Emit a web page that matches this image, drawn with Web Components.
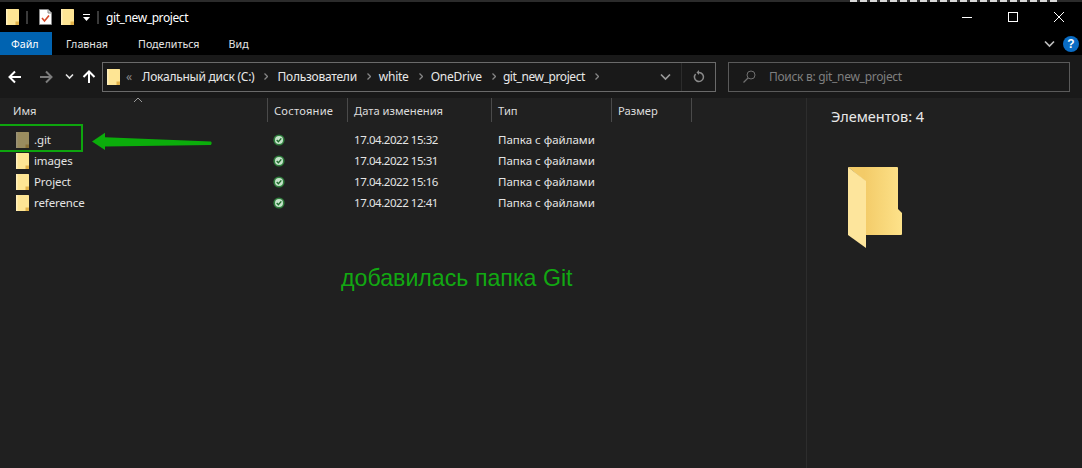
<!DOCTYPE html>
<html>
<head>
<meta charset="utf-8">
<style>
  html, body { margin: 0; height: 100%; background: #202020; overflow: hidden; }
  body { font-family: "Noto Sans", "Open Sans", sans-serif; }
</style>
</head>
<body>
<explorer-window></explorer-window>

<template id="folder-tpl">
  <style>
    :host { display: inline-flex; width: 13px; height: 16px; flex: none; }
    svg { display: block; width: 100%; height: 100%; }
  </style>
  <svg viewBox="0 0 13 16">
    <path d="M0 0.5 Q0 0 .5 0 H12.5 Q13 0 13 .5 V15.5 Q13 16 12.5 16 H.5 Q0 16 0 15.5Z" fill="#fee594"/>
    <path d="M9.5 16 V12.5 H13 V16Z" fill="#e2b24a"/>
    <path d="M0 0 H1.5 V16 H0Z" fill="#fff0bd"/>
  </svg>
</template>

<script>
class BaseEl extends HTMLElement {
  constructor(html) {
    super();
    this.attachShadow({mode: "open"}).innerHTML = html;
  }
}

class FolderIcon extends HTMLElement {
  constructor() {
    super();
    const shadow = this.attachShadow({mode: "open"});
    shadow.appendChild(document.getElementById("folder-tpl").content.cloneNode(true));
  }
}

class TitleBar extends BaseEl {
  constructor() {
    super(`
    <style>
      :host { display: flex; align-items: center; height: 30px; background: #000; color: #fff; font-size: 12px; padding-left: 6px; box-sizing: border-box; }
      .sep { width: 2px; height: 13px; background: #3a3a3a; flex: none; }
      .doc { margin: 0 9px 0 11px; display: block; flex: none; }
      .down { margin: 0 6px 0 8px; display: block; flex: none; }
      .name { margin-left: 7px; letter-spacing: -.4px; }
      .win { margin-left: auto; display: flex; height: 30px; }
      .win div { width: 46px; display: flex; align-items: center; justify-content: center; }
    </style>
    <folder-icon></folder-icon>
    <div class="sep" style="margin-left:7px"></div>
    <svg class="doc" width="13" height="16" viewBox="0 0 13 16">
      <path d="M.5 .5H9L12.5 4V15.5H.5Z" fill="#fff" stroke="#8a8a8a"/>
      <path d="M9 .5V4H12.5" fill="#ddd" stroke="#8a8a8a"/>
      <path d="M3 9L5.5 12L10 6.5" fill="none" stroke="#d4492a" stroke-width="1.6"/>
    </svg>
    <folder-icon></folder-icon>
    <svg class="down" width="9" height="9" viewBox="0 0 9 9">
      <path d="M1 1.5H8" stroke="#fff"/><path d="M1 4H8L4.5 8Z" fill="#fff"/>
    </svg>
    <div class="sep"></div>
    <span class="name">git_new_project</span>
    <div class="win">
      <div><svg width="10" height="10"><path d="M0 5.5H10" stroke="#fff"/></svg></div>
      <div><svg width="10" height="10"><rect x=".5" y=".5" width="9" height="9" fill="none" stroke="#fff"/></svg></div>
      <div><svg width="10" height="10"><path d="M0 0L10 10M10 0L0 10" stroke="#fff"/></svg></div>
    </div>`);
  }
}

class RibbonTabs extends BaseEl {
  constructor() {
    super(`
    <style>
      :host { display: flex; align-items: center; height: 23px; background: #000; color: #e4e4e4; font-size: 10.7px; }
      .t { height: 23px; display: flex; align-items: center; }
      .t.on { background: #0063b1; color: #fff; box-sizing: border-box; width: 52px; padding-left: 11px; }
      .end { margin-left: auto; display: flex; align-items: center; padding-right: 3px; gap: 8px; }
      .help { width: 16px; height: 16px; border-radius: 50%; background: #0a6cc4; color: #fff; font: bold 12px/16px "Liberation Sans", sans-serif; text-align: center; }
    </style>
    <div class="t on">Файл</div>
    <div class="t" style="margin-left:14px">Главная</div>
    <div class="t" style="margin-left:30px">Поделиться</div>
    <div class="t" style="margin-left:29px">Вид</div>
    <div class="end">
      <svg width="11" height="8" viewBox="0 0 11 8"><path d="M1 1.5L5.5 6L10 1.5" fill="none" stroke="#bdbdbd" stroke-width="1.7"/></svg>
      <div class="help">?</div>
    </div>`);
  }
}

class NavBar extends BaseEl {
  constructor() {
    super(`
    <style>
      :host { display: flex; align-items: center; height: 43px; background: #191919; color: #e8e8e8; font-size: 12px; }
      .arrows { width: 102px; flex: none; display: flex; align-items: center; box-sizing: border-box; padding-left: 8px; }
      .addr { display: flex; align-items: center; width: 614px; height: 30px; box-sizing: border-box; border: 1px solid #6a6a6a; padding-left: 4px; flex: none; }
      .crumb { white-space: nowrap; letter-spacing: -.25px; }
      .crumb.git { letter-spacing: -.4px; }
      .gt { display: block; margin: 0 9px 0 10px; flex: none; }
      .gt.n { margin-right: 8px; }
      .gt.s { margin-right: 7px; }
      .ll { color: #8a8a8a; margin: 0 10px 0 6px; font-size: 12px; }
      .drop { margin-left: auto; width: 32px; display: flex; justify-content: center; flex: none; }
      .refresh { width: 33px; height: 28px; display: flex; align-items: center; justify-content: center; border-left: 1px solid #2c2c2c; flex: none; }
      .search { margin-left: 12px; width: 342px; height: 30px; box-sizing: border-box; border: 1px solid #5a5a5a; display: flex; align-items: center; padding-left: 14px; color: #7f7f7f; flex: none; }
      .search svg { margin-right: 13px; }
      .search span { letter-spacing: -.3px; }
    </style>
    <div class="arrows">
      <svg width="14" height="14" viewBox="0 0 14 14"><path d="M13 7H2M7 1.5L1.5 7L7 12.5" fill="none" stroke="#fff" stroke-width="2"/></svg>
      <svg style="margin-left:17px" width="14" height="14" viewBox="0 0 14 14"><path d="M1 7H12M7 1.5L12.5 7L7 12.5" fill="none" stroke="#7c7c7c" stroke-width="2"/></svg>
      <svg style="margin-left:12px" width="9" height="7" viewBox="0 0 9 7"><path d="M1 1.5L4.5 5L8 1.5" fill="none" stroke="#e4e4e4" stroke-width="1.6"/></svg>
      <svg style="margin-left:8px" width="14" height="14" viewBox="0 0 14 14"><path d="M7 13V2M1.5 7L7 1.5L12.5 7" fill="none" stroke="#fff" stroke-width="2"/></svg>
    </div>
    <div class="addr">
      <folder-icon></folder-icon>
      <span class="ll">«</span>
      <span class="crumb">Локальный диск (C:)</span>${NavBar.gt("")}
      <span class="crumb">Пользователи</span>${NavBar.gt("n")}
      <span class="crumb">white</span>${NavBar.gt("n")}
      <span class="crumb">OneDrive</span>${NavBar.gt("s")}
      <span class="crumb git">git_new_project</span>${NavBar.gt("")}
      <div class="drop"><svg width="11" height="8" viewBox="0 0 11 8"><path d="M1 1.5L5.5 6L10 1.5" fill="none" stroke="#9a9a9a" stroke-width="1.7"/></svg></div>
      <div class="refresh"><svg width="12" height="13" viewBox="0 0 12 13"><path d="M6 2.5A4.5 4.5 0 1 1 2.6 4" fill="none" stroke="#8a8a8a" stroke-width="1.5"/><path d="M6 0V5L3.5 2.5Z" fill="#8a8a8a"/></svg></div>
    </div>
    <div class="search">
      <svg width="13" height="13" viewBox="0 0 13 13"><circle cx="8" cy="5" r="4" fill="none" stroke="#6f6f6f"/><path d="M5 8L.5 12.5" stroke="#6f6f6f" stroke-width="1.2"/></svg>
      <span>Поиск в: git_new_project</span>
    </div>`);
  }
  static gt(cls) {
    return `<svg class="gt ${cls}" width="4" height="7" viewBox="0 0 4 7"><path d="M.5 .5L3.5 3.5L.5 6.5" fill="none" stroke="#858585" stroke-width="1.3"/></svg>`;
  }
}

class ColumnHeader extends BaseEl {
  constructor() {
    super(`
    <style>
      :host { display: grid; grid-template-columns: 268px 80px 144px 120px 80px; height: 26px; color: #dcdcdc; font-size: 11.2px; position: relative; }
      div { display: flex; align-items: center; padding-left: 6px; box-sizing: border-box; border-right: 1px solid #4a4a4a; height: 24px; white-space: nowrap; }
      div:first-of-type { padding-left: 13px; }
      .st { letter-spacing: .2px; }
      .sort { position: absolute; left: 133px; top: -1px; }
    </style>
    <div>Имя</div><div class="st">Состояние</div><div>Дата изменения</div><div>Тип</div><div>Размер</div>
    <svg class="sort" width="10" height="6" viewBox="0 0 10 6"><path d="M1 5L5 1L9 5" fill="none" stroke="#9a9a9a"/></svg>`);
  }
}

class FileRow extends BaseEl {
  constructor() {
    super(`
    <style>
      :host { display: grid; grid-template-columns: 268px 80px 144px 120px; height: 21px; align-items: center; color: #e4e4e4; font-size: 11.5px; }
      .name { display: flex; align-items: center; padding-left: 16px; gap: 5px; letter-spacing: -.1px; }
      .state { padding-left: 5px; display: flex; align-items: center; }
      .date { padding-left: 6px; letter-spacing: -.45px; }
      .type { padding-left: 6px; white-space: nowrap; }
      :host([dim]) folder-icon { opacity: .55; }
    </style>
    <div class="name"><folder-icon></folder-icon><span id="n"></span></div>
    <div class="state"><svg width="12" height="12" viewBox="0 0 12 12"><circle cx="6" cy="6" r="5.6" fill="#2f7d3c"/><circle cx="6" cy="6" r="4" fill="#c4e3c9"/><path d="M3.7 6.1L5.4 7.8L8.3 4.4" fill="none" stroke="#1f6a2d" stroke-width="1.4"/></svg></div>
    <div class="date" id="d"></div>
    <div class="type">Папка с файлами</div>`);
  }
  connectedCallback() {
    this.shadowRoot.getElementById("n").textContent = this.getAttribute("name");
    this.shadowRoot.getElementById("d").textContent = this.getAttribute("date");
  }
}

class PreviewPane extends BaseEl {
  constructor() {
    super(`
    <style>
      :host { display: block; border-left: 1px solid #2d2d2d; height: 100%; box-sizing: border-box; color: #e8e8e8; font-size: 14.5px; padding: 8px 0 0 24px; }
      svg { display: block; margin: 41px 0 0 17px; }
    </style>
    <div>Элементов: 4</div>
    <svg width="55" height="82" viewBox="0 0 55 82">
      <defs><linearGradient id="b" x1="0" x2="1"><stop offset=".3" stop-color="#f3cb68"/><stop offset="1" stop-color="#fde28a"/></linearGradient></defs>
      <path d="M0 0H49Q50 0 50 1V42L54 46V67Q54 68 53 68H17V14Z" fill="url(#b)"/>
      <path d="M0 0L18 14V81L0 68Z" fill="#fde59c"/>
    </svg>`);
  }
}

class ExplorerWindow extends BaseEl {
  constructor() {
    super(`
    <style>
      :host { display: flex; flex-direction: column; height: 468px; background: #202020; position: relative; overflow: hidden; }
      .top { height: 2px; background: #2b2b2b; flex: none; position: relative; }
      .top i { position: absolute; left: 850px; top: 0; width: 210px; height: 2px; background: repeating-linear-gradient(90deg, #d8d8d8 0 7px, #2b2b2b 7px 10px); }
      .main { flex: 1; display: grid; grid-template-columns: 806px 1fr; min-height: 0; }
      .rows { padding-top: 5px; }
      .box { position: absolute; left: -3px; top: 124px; width: 86px; height: 28px; border: 2px solid #0ea50e; box-sizing: border-box; }
      .arrow { position: absolute; left: 92px; top: 132px; }
      .note { position: absolute; left: 341px; top: 265px; color: #12a812; font: 23.2px "Liberation Sans", sans-serif; }
    </style>
    <div class="top"><i></i></div>
    <title-bar></title-bar>
    <ribbon-tabs></ribbon-tabs>
    <nav-bar></nav-bar>
    <div class="main">
      <div>
        <column-header></column-header>
        <div class="rows">
          <file-row name=".git" date="17.04.2022 15:32" dim></file-row>
          <file-row name="images" date="17.04.2022 15:31"></file-row>
          <file-row name="Project" date="17.04.2022 15:16"></file-row>
          <file-row name="reference" date="17.04.2022 12:41"></file-row>
        </div>
      </div>
      <preview-pane></preview-pane>
    </div>
    <div class="box"></div>
    <svg class="arrow" width="121" height="20" viewBox="0 0 121 20"><path d="M0 9.6L13 .7V5.3L119 9.6Q120.5 11 119 13L13 14.6V18Z" fill="#0bad0b"/></svg>
    <div class="note">добавилась папка Git</div>`);
  }
}

customElements.define("folder-icon", FolderIcon);
customElements.define("title-bar", TitleBar);
customElements.define("ribbon-tabs", RibbonTabs);
customElements.define("nav-bar", NavBar);
customElements.define("column-header", ColumnHeader);
customElements.define("file-row", FileRow);
customElements.define("preview-pane", PreviewPane);
customElements.define("explorer-window", ExplorerWindow);
</script>
</body>
</html>
